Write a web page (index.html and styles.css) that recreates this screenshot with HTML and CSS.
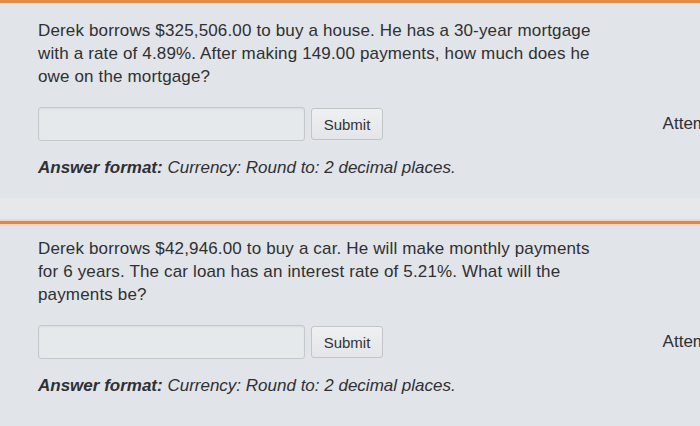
FILE: index.html
```html
<!DOCTYPE html>
<html>
<head>
<meta charset="utf-8">
<link rel="stylesheet" href="styles.css">
</head>
<body>
<div class="page">
  <div class="top-bar"></div>
  <section class="question first">
    <p class="prompt">Derek borrows $325,506.00 to buy a house. He has a 30-year mortgage with a rate of 4.89%. After making 149.00 payments, how much does he owe on the mortgage?</p>
    <div class="answer-row">
      <input class="answer-input" type="text">
      <button class="submit">Submit</button>
      <span class="attempts">Attempt 1/10</span>
    </div>
    <p class="format"><b>Answer format:</b> Currency: Round to: 2 decimal places.</p>
  </section>
  <div class="gap"></div>
  <div class="divider"></div>
  <section class="question second">
    <p class="prompt">Derek borrows $42,946.00 to buy a car. He will make monthly payments for 6 years. The car loan has an interest rate of 5.21%. What will the payments be?</p>
    <div class="answer-row">
      <input class="answer-input" type="text">
      <button class="submit">Submit</button>
      <span class="attempts">Attempt 1/10</span>
    </div>
    <p class="format"><b>Answer format:</b> Currency: Round to: 2 decimal places.</p>
  </section>
</div>
</body>
</html>
```

FILE: styles.css
```css
html, body {
  margin: 0;
  padding: 0;
  width: 700px;
  height: 426px;
  overflow: hidden;
  background: #e1e4e8;
}
.page {
  font-family: "Liberation Sans", Arial, sans-serif;
  color: #2f3033;
  width: 700px;
}
.top-bar {
  height: 3px;
  background: #e08a45;
}
.question {
  padding-left: 38px;
}
.question.first {
  padding-top: 16px;
  padding-bottom: 19px;
}
.question.second {
  padding-top: 11px;
  padding-bottom: 20px;
}
.prompt {
  margin: 0;
  width: 570px;
  font-size: 17px;
  line-height: 23px;
  letter-spacing: 0.15px;
}
.answer-row {
  display: flex;
  align-items: center;
  margin-top: 19px;
  height: 34px;
}
.answer-input {
  box-sizing: border-box;
  width: 267px;
  height: 34px;
  margin: 0;
  border: 1px solid #c6c9cc;
  border-radius: 3px;
  background: #e6e9ec;
  box-shadow: inset 0 1px 2px rgba(0,0,0,0.06);
}
.submit {
  box-sizing: border-box;
  margin-left: 6px;
  width: 72px;
  height: 32px;
  border: 1px solid #c2c5c8;
  border-radius: 3px;
  background: linear-gradient(#eef0f2, #e3e5e8);
  font-family: "Liberation Sans", Arial, sans-serif;
  font-size: 15px;
  color: #333;
  padding: 0;
}
.attempts {
  margin-left: auto;
  margin-right: -59px;
  font-size: 17px;
  white-space: nowrap;
  color: #2f3033;
}
.format {
  margin: 15px 0 0;
  font-size: 17px;
  line-height: 23px;
  font-style: italic;
}
.gap {
  height: 21px;
  background: #e6e8eb;
}
.divider {
  height: 3px;
  background: #d9894c;
  border-top: 2px solid #f0d6c0;
  border-bottom: 2px solid #f0d6c0;
}
```
